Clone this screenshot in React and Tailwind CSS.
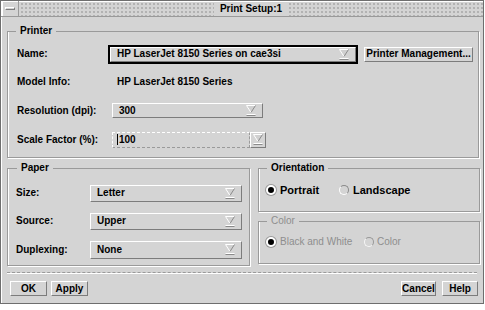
import React from "react";

const Arrow = () => (
  <svg width="10" height="11" viewBox="0 0 10 11" className="shrink-0">
    <path d="M1 1 H9 L5 7 Z" fill="#d0d0d0" />
    <path d="M0.5 0.5 H9.5" stroke="#ffffff" />
    <path d="M0.5 0.5 L5 7.5" stroke="#ffffff" />
    <path d="M9.5 0.5 L5 7.5" stroke="#8a8a8a" />
    <path d="M0.5 9.5 H9.5" stroke="#ffffff" />
    <path d="M0.5 10.5 H9.5" stroke="#8a8a8a" />
  </svg>
);

const Raised =
  "border border-t-white border-l-white border-r-[#7c7c7c] border-b-[#7c7c7c]";

const Combo = ({ text, className }) => (
  <div
    className={`flex items-center justify-between pl-[6px] pr-[6px] ${Raised} ${className}`}
  >
    <span>{text}</span>
    <Arrow />
  </div>
);

const Button = ({ children, className }) => (
  <div
    className={`flex items-center justify-center h-[15px] ${Raised} ${className}`}
  >
    {children}
  </div>
);

const Radio = ({ on, disabled }) =>
  on ? (
    <span className="inline-block w-[10px] h-[10px] rounded-full bg-black border-2 border-white shadow-[0_0_0_1px_#9a9a9a] shrink-0" />
  ) : (
    <span
      className={`inline-block w-[10px] h-[10px] rounded-full border-[1.5px] border-t-[#8a8a8a] border-l-white border-b-white border-r-[#8a8a8a] shrink-0 ${
        disabled ? "opacity-80" : ""
      }`}
    />
  );

const Group =
  "border border-[#9a9a9a] shadow-[1px_1px_0_#ffffff,inset_1px_0_0_#ffffff]";

export default function App() {
  return (
    <div className="w-[485px] h-[310px] bg-white font-['Liberation_Sans',Arial,sans-serif] text-[10px] font-bold text-black leading-[12px]">
      <div className="w-[484px] h-[304px] bg-[#d4d4d4] border border-[#6e6e6e] shadow-[inset_1px_1px_0_#ffffff] flex flex-col">
        {/* title bar */}
        <div className="h-[16px] flex border-b border-[#9a9a9a]">
          <div className="w-[17px] h-full ml-[1px] flex items-center justify-center border-r border-[#9a9a9a] shadow-[inset_1px_1px_0_#ffffff]">
            <div className="w-[10px] h-[3px] bg-[#d4d4d4] border border-t-white border-l-white border-b-[#7c7c7c] border-r-[#7c7c7c]" />
          </div>
          <div className="flex-1 flex items-center justify-center bg-[radial-gradient(circle,#b0b0b0_0.7px,transparent_0.8px)] bg-[length:4px_4px] bg-[position:1px_1px]">
            <span className="bg-[#d4d4d4] px-[6px] leading-[14px]">
              Print Setup:1
            </span>
          </div>
        </div>

        {/* body */}
        <div className="flex-1 flex flex-col pl-[6px] pt-[8px]">
          {/* Printer */}
          <fieldset className={`w-[472px] pl-[9px] pt-[3px] pb-[3px] ${Group}`}>
            <legend className="px-[4px] -ml-[1px]">Printer</legend>
            <div className="h-[28px] flex items-center">
              <span className="w-[91px]">Name:</span>
              <div className="w-[250px] h-[19px] border-2 border-black">
                <Combo text="HP LaserJet 8150 Series on cae3si" className="h-full" />
              </div>
              <Button className="w-[109px] ml-[6px]">Printer Management...</Button>
            </div>
            <div className="h-[28px] flex items-center">
              <span className="w-[100px]">Model Info:</span>
              <span>HP LaserJet 8150 Series</span>
            </div>
            <div className="h-[29px] flex items-center">
              <span className="w-[95px]">Resolution (dpi):</span>
              <Combo
                text="300"
                className="w-[151px] h-[15px] border-t-dashed"
              />
            </div>
            <div className="h-[29px] flex items-center">
              <span className="w-[95px]">Scale Factor (%):</span>
              <div className="flex h-[16px]">
                <div className="w-[138px] h-full flex items-center pl-[4px] border border-dashed border-t-white border-l-white border-b-[#9a9a9a] border-r-[#9a9a9a]">
                  <span className="w-[1px] h-[11px] bg-black mr-[1px]" />
                  <span>100</span>
                </div>
                <div className={`w-[16px] h-full flex items-center justify-center ${Raised}`}>
                  <Arrow />
                </div>
              </div>
            </div>
          </fieldset>

          <div className="flex mt-[4px] gap-[8px]">
            {/* Paper */}
            <fieldset className={`w-[243px] pl-[8px] pt-[5px] pb-[1px] ${Group}`}>
              <legend className="px-[4px] ml-[1px]">Paper</legend>
              <div className="h-[28px] flex items-center">
                <span className="w-[74px]">Size:</span>
                <Combo text="Letter" className="w-[152px] h-[17px]" />
              </div>
              <div className="h-[28px] flex items-center">
                <span className="w-[74px]">Source:</span>
                <Combo text="Upper" className="w-[152px] h-[17px]" />
              </div>
              <div className="h-[29px] flex items-center">
                <span className="w-[74px]">Duplexing:</span>
                <Combo text="None" className="w-[152px] h-[18px]" />
              </div>
            </fieldset>

            <div className="flex flex-col gap-[3px]">
              {/* Orientation */}
              <fieldset className={`w-[222px] pl-[7px] pt-[3px] pb-[8px] ${Group}`}>
                <legend className="px-[4px] ml-[1px]">Orientation</legend>
                <div className="h-[26px] flex items-center">
                  <Radio on />
                  <span className="ml-[4px] w-[59px] text-[11px]">Portrait</span>
                  <Radio />
                  <span className="ml-[4px] text-[11px]">Landscape</span>
                </div>
              </fieldset>
              {/* Color */}
              <fieldset className={`w-[222px] pl-[7px] pt-[3px] pb-[9px] ${Group} text-[#8e8e8e] font-normal`}>
                <legend className="px-[4px] ml-[1px]">Color</legend>
                <div className="h-[24px] flex items-center">
                  <Radio on />
                  <span className="ml-[4px] w-[84px]">Black and White</span>
                  <Radio disabled />
                  <span className="ml-[3px]">Color</span>
                </div>
              </fieldset>
            </div>
          </div>

          <div className="w-[470px] mt-[6px] border-t border-dashed border-[#9a9a9a] shadow-[0_1px_0_#ffffff]" />

          <div className="flex items-center mt-[8px] pl-[3px] pr-[5px]">
            <Button className="w-[37px]">OK</Button>
            <Button className="w-[37px] ml-[4px]">Apply</Button>
            <div className="flex-1" />
            <Button className="w-[35px]">Cancel</Button>
            <Button className="w-[36px] ml-[6px]">Help</Button>
          </div>
        </div>
      </div>
    </div>
  );
}
